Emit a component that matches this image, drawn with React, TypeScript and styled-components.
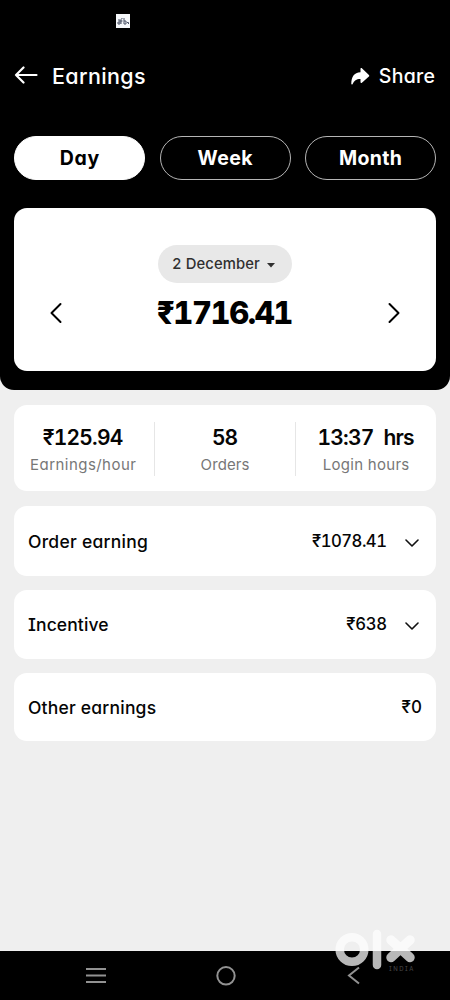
import React from "react";
import styled, { createGlobalStyle } from "styled-components";

const GlobalStyle = createGlobalStyle`
  * { box-sizing: border-box; }
  body {
    margin: 0;
    background: #efefef;
    font-family: Inter, "Liberation Sans", sans-serif;
    font-feature-settings: "cv11", "cv08", "tnum";
    color: #050505;
  }
  button { font: inherit; font-feature-settings: inherit; color: inherit; background: none; border: 0; padding: 0; }
  svg { display: block; }
`;

const Screen = styled.div`
  position: relative;
  width: 450px;
  height: 1000px;
  display: flex;
  flex-direction: column;
  overflow: hidden;
  background: #efefef;
`;

const Hero = styled.header`
  height: 390px;
  padding: 0 14px;
  background: #000;
  border-radius: 0 0 14px 14px;
  color: #fff;
`;

const StatusBar = styled.div`
  height: 56px;
  padding: 14px 0 0 102px;
`;

const TitleBar = styled.div`
  display: flex;
  align-items: center;
  height: 40px;
`;

const Text = styled.span<{ $size: number; $weight?: number; $spacing?: number; $color?: string }>`
  font-size: ${(p) => p.$size}px;
  line-height: 1.2;
  font-weight: ${(p) => p.$weight ?? 550};
  letter-spacing: ${(p) => p.$spacing ?? 0}px;
  margin-right: ${(p) => -(p.$spacing ?? 0)}px;
  color: ${(p) => p.$color ?? "inherit"};
  white-space: pre;
`;

const Title = styled.h1`
  display: flex;
  margin: 0;
  padding-top: 2px;
`;

const BackButton = styled.button`
  margin-right: 14px;
`;

const ShareButton = styled.button`
  display: flex;
  align-items: center;
  gap: 9px;
  margin-left: auto;
  padding: 2px 1px 0 0;
`;

const Tabs = styled.div`
  display: grid;
  grid-template-columns: repeat(3, 131px);
  justify-content: space-between;
  margin: 40px 0 28px;
`;

const Tab = styled.button<{ $active?: boolean }>`
  display: flex;
  align-items: center;
  justify-content: center;
  height: 44px;
  padding-top: 2px;
  border: 1px solid ${(p) => (p.$active ? "#fff" : "#b5b5b5")};
  border-radius: 22px;
  background: ${(p) => (p.$active ? "#fff" : "#000")};
  color: ${(p) => (p.$active ? "#000" : "#fff")};
`;

const TotalCard = styled.section`
  display: flex;
  flex-direction: column;
  align-items: center;
  height: 163px;
  padding: 37px 35px 0;
  border-radius: 13px;
  background: #fff;
  color: #000;
`;

const DatePill = styled.button`
  display: flex;
  align-items: center;
  gap: 7px;
  height: 38px;
  width: 134px;
  padding: 2px 0 0 14px;
  border-radius: 19px;
  background: #e8e8e8;
`;

const TotalRow = styled.div`
  display: flex;
  align-items: center;
  justify-content: space-between;
  width: 100%;
  height: 60px;
`;

const Body = styled.main`
  flex: 1;
  display: flex;
  flex-direction: column;
  padding: 15px 14px 0;
`;

const Card = styled.section`
  background: #fff;
  border-radius: 13px;
`;

const Stats = styled(Card)`
  display: grid;
  grid-template-columns: 140px 141px 141px;
  height: 86px;
  padding: 17px 0 15px;
  margin-bottom: 15px;
`;

const Stat = styled.div`
  display: flex;
  flex-direction: column;
  align-items: center;
  gap: 6px;
  padding-top: 3px;
  & + & { border-left: 1px solid #e6e6e6; }
  &:first-child { padding-right: 2px; }
`;

const Row = styled(Card)<{ $height: number }>`
  display: flex;
  align-items: center;
  justify-content: space-between;
  height: ${(p) => p.$height}px;
  padding: 0 14px;
  margin-bottom: 14px;
`;

const Amount = styled.div`
  display: flex;
  align-items: center;
  gap: 18px;
`;

const ChevronSlot = styled.span`
  padding: 3px 3px 0 0;
`;

const NavBar = styled.nav`
  display: flex;
  align-items: center;
  height: 49px;
  padding: 0 89px 0 86px;
  justify-content: space-between;
  background: #000;
`;

const Watermark = styled.div`
  position: absolute;
  left: 333px;
  top: 928px;
`;

const Chevron = () => (
  <ChevronSlot>
    <svg width="14" height="8" viewBox="0 0 14 8" fill="none" stroke="#111" strokeWidth="1.6" strokeLinecap="round" strokeLinejoin="round">
      <path d="M1 1l6 6 6-6" />
    </svg>
  </ChevronSlot>
);

export default function App() {
  return (
    <>
      <GlobalStyle />
      <Screen>
        <Hero>
          <StatusBar>
            <svg width="14" height="14" viewBox="0 0 14 14">
              <rect width="14" height="14" fill="#f6f8fb" />
              <path d="M2 6h2v4H2V8h2M5 10V5.500q0-1 1.500-1M4.500 7h2M8 4v6h2V7H8M11 8.500h1.500V10" fill="none" stroke="#4a5266" strokeWidth="1" />
            </svg>
          </StatusBar>
          <TitleBar>
            <BackButton aria-label="Back">
              <svg width="24" height="20" viewBox="0 0 24 20" fill="none" stroke="#fff" strokeWidth="2.200" strokeLinecap="round" strokeLinejoin="round">
                <path d="M9.500 1.500L2 9l7.500 7.500M2 9h20.500" />
              </svg>
            </BackButton>
            <Title><Text $size={21.5} $spacing={0.35}>Earnings</Text></Title>
            <ShareButton>
              <svg width="20" height="18" viewBox="0 0 20 18" fill="#fff">
                <path d="M10.500 .8c0-.8.800-1.100 1.400-.6l7 6.700c.5.500.5 1 0 1.500l-7 6.400c-.6.500-1.400.2-1.400-.6v-3.200c-4.500 0-6 1.500-8 5.200-.3.500-1.200.3-1.200-.2C1.300 9 4 4.400 10.500 4.200z" />
              </svg>
              <Text $size={19.5} $spacing={0.3}>Share</Text>
            </ShareButton>
          </TitleBar>
          <Tabs>
            <Tab $active><Text $size={19.5} $weight={650} $spacing={0.6}>Day</Text></Tab>
            <Tab><Text $size={19.5} $weight={650} $spacing={0.4}>Week</Text></Tab>
            <Tab><Text $size={19.5} $weight={650} $spacing={0.3}>Month</Text></Tab>
          </Tabs>
          <TotalCard>
            <DatePill>
              <Text $size={14.8} $weight={500} $spacing={0.1} $color="#303030">2 December</Text>
              <svg width="8" height="5" viewBox="0 0 8 5"><path d="M0 0h8L4 4.500z" fill="#303030" /></svg>
            </DatePill>
            <TotalRow>
              <svg width="14" height="22" viewBox="0 0 14 22" fill="none" stroke="#000" strokeWidth="2" strokeLinecap="round" strokeLinejoin="round">
                <path d="M11.500 2L2.500 11l9 9" />
              </svg>
              <Text $size={31} $weight={800} $spacing={-1.4}>₹1716.41</Text>
              <svg width="14" height="22" viewBox="0 0 14 22" fill="none" stroke="#000" strokeWidth="2" strokeLinecap="round" strokeLinejoin="round">
                <path d="M2.500 2l9 9-9 9" />
              </svg>
            </TotalRow>
          </TotalCard>
        </Hero>
        <Body>
          <Stats>
            <Stat>
              <Text $size={21} $weight={580} $spacing={-0.8}>₹125.94</Text>
              <Text $size={15} $weight={400} $spacing={0.45} $color="#777">Earnings/hour</Text>
            </Stat>
            <Stat>
              <Text $size={21} $weight={580} $spacing={-1}>58</Text>
              <Text $size={15} $weight={400} $spacing={0.1} $color="#777">Orders</Text>
            </Stat>
            <Stat>
              <Text $size={21} $weight={580} $spacing={-0.75}>13:37  hrs</Text>
              <Text $size={15} $weight={400} $spacing={0.3} $color="#777">Login hours</Text>
            </Stat>
          </Stats>
          <Row $height={70}>
            <Text $size={17.5} $spacing={0.25}>Order earning</Text>
            <Amount><Text $size={16.7} $spacing={-0.5}>₹1078.41</Text><Chevron /></Amount>
          </Row>
          <Row $height={69}>
            <Text $size={17.5} $spacing={0.1}>Incentive</Text>
            <Amount><Text $size={16.7} $spacing={-0.3}>₹638</Text><Chevron /></Amount>
          </Row>
          <Row $height={68}>
            <Text $size={17.5} $spacing={0.2}>Other earnings</Text>
            <Text $size={17}>₹0</Text>
          </Row>
        </Body>
        <NavBar>
          <svg width="20" height="17" viewBox="0 0 20 17" stroke="#929292" strokeWidth="2"><path d="M0 2h20M0 8.500h20M0 15h20" /></svg>
          <svg width="22" height="20" viewBox="0 0 22 20" fill="none" stroke="#929292" strokeWidth="2"><circle cx="10" cy="9.800" r="8.700" /></svg>
          <svg width="14" height="20" viewBox="0 0 14 20" fill="none" stroke="#929292" strokeWidth="2"><path d="M12 1.500L2 9.500l10 8" /></svg>
        </NavBar>
        <Watermark>
          <svg width="86" height="46" viewBox="0 0 86 46" fill="none" stroke="#fff" strokeLinecap="round" opacity="0.72">
            <circle cx="19" cy="21.500" r="12.300" strokeWidth="8.500" />
            <path d="M44 6v31" strokeWidth="8.500" />
            <path d="M58 12l19 17.500M77 12L58 29.500" strokeWidth="9.500" />
            <text x="56" y="43" fontSize="6" letterSpacing="1.500" fill="#666" stroke="none">INDIA</text>
          </svg>
        </Watermark>
      </Screen>
    </>
  );
}
